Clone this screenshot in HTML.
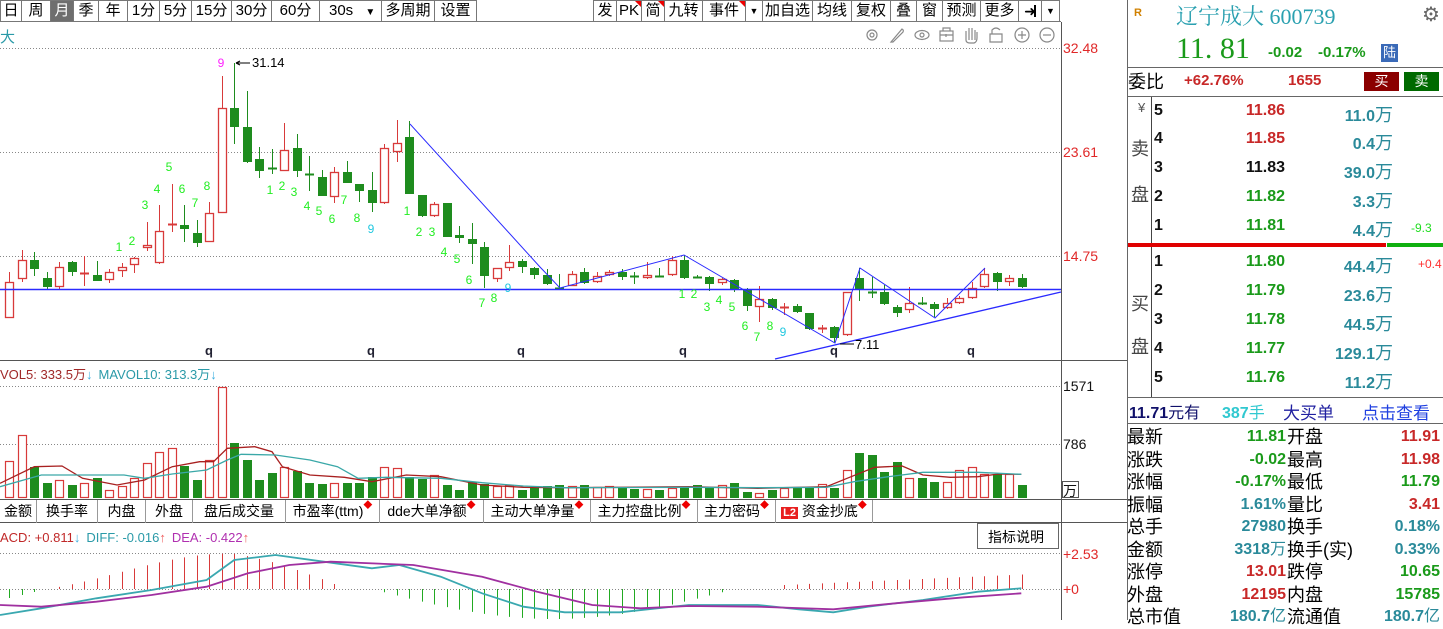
<!DOCTYPE html>
<html><head><meta charset="utf-8">
<style>
*{margin:0;padding:0;box-sizing:border-box}
body{width:1443px;height:620px;overflow:hidden;background:#fff;font-family:"Liberation Sans","Noto Sans CJK SC",sans-serif;position:relative}
.tb{position:absolute;top:0;height:22px;border:1px solid #777;border-left:none;font-size:15px;line-height:20px;text-align:center;color:#000;background:#fff}
.tb.sel{background:#6e6e6e;color:#fff}
.tri{position:absolute;top:0;right:0;width:0;height:0;border-top:6px solid #e00;border-left:6px solid transparent}
.abs{position:absolute;white-space:nowrap}
.rp{position:absolute;left:1127px;top:0;width:316px;height:620px;border-left:1px solid #666}
.hl{position:absolute;height:1px;background:#666}
.b{font-weight:bold}
.tab{position:absolute;top:500px;height:23px;border-right:1px solid #999;font-size:14px;line-height:23px;text-align:center}
.dot{color:#e00;font-size:9px;vertical-align:top;line-height:10px}
</style></head><body>

<div class="abs" style="left:0;top:21px;width:1061px;height:1px;background:#777"></div>
<div class="tb" style="left:0;width:22px;border-left:1px solid #777">日</div>
<div class="tb" style="left:22px;width:29px">周</div>
<div class="tb sel" style="left:51px;width:23px">月</div>
<div class="tb" style="left:74px;width:25px">季</div>
<div class="tb" style="left:99px;width:29px">年</div>
<div class="tb" style="left:128px;width:32px">1分</div>
<div class="tb" style="left:160px;width:32px">5分</div>
<div class="tb" style="left:192px;width:40px">15分</div>
<div class="tb" style="left:232px;width:40px">30分</div>
<div class="tb" style="left:272px;width:48px">60分</div>
<div class="tb" style="left:320px;width:62px;text-align:left;padding-left:9px">30s <span style="font-size:10px;padding-left:8px">▼</span></div>
<div class="tb" style="left:382px;width:53px">多周期</div>
<div class="tb" style="left:435px;width:42px">设置</div>

<div class="tb" style="left:593px;width:24px;border-left:1px solid #777">发</div>
<div class="tb" style="left:617px;width:25px">PK<span class="tri"></span></div>
<div class="tb" style="left:642px;width:23px">简<span class="tri"></span></div>
<div class="tb" style="left:665px;width:38px">九转</div>
<div class="tb" style="left:703px;width:43px">事件<span class="tri"></span></div>
<div class="tb" style="left:746px;width:17px;font-size:9px">▼</div>
<div class="tb" style="left:763px;width:50px">加自选</div>
<div class="tb" style="left:813px;width:39px">均线</div>
<div class="tb" style="left:852px;width:39px">复权</div>
<div class="tb" style="left:891px;width:26px">叠</div>
<div class="tb" style="left:917px;width:26px">窗</div>
<div class="tb" style="left:943px;width:38px">预测</div>
<div class="tb" style="left:981px;width:38px">更多</div>
<div class="tb" style="left:1019px;width:23px;font-size:14px">➜<span style="position:absolute;left:15px;top:4px;width:2px;height:12px;background:#000"></span></div>
<div class="tb" style="left:1042px;width:18px;font-size:9px">▼</div>

<div class="abs" style="left:0;top:26px;font-size:15px;color:#2a9aa8">大</div>

<svg id="ch" class="abs" style="left:0;top:0" width="1127" height="620" xmlns="http://www.w3.org/2000/svg" font-family="Liberation Sans, Noto Sans CJK SC, sans-serif">
<g stroke="#888" stroke-dasharray="1,2" stroke-width="1">
<line x1="0" y1="48.5" x2="1060" y2="48.5"/>
<line x1="0" y1="152.5" x2="1060" y2="152.5"/>
<line x1="0" y1="256.5" x2="1060" y2="256.5"/>
<line x1="0" y1="386.5" x2="1060" y2="386.5"/>
<line x1="0" y1="444.5" x2="1060" y2="444.5"/>
<line x1="0" y1="589.5" x2="1060" y2="589.5"/>
<line x1="0" y1="553.5" x2="1060" y2="553.5"/>
</g>
<g stroke="#555" stroke-width="1">
<line x1="1061.5" y1="22" x2="1061.5" y2="620"/>
<line x1="0" y1="360.5" x2="1127" y2="360.5"/>
<line x1="0" y1="499.5" x2="1127" y2="499.5"/>
<line x1="0" y1="522.5" x2="1127" y2="522.5"/>
</g>
<g fill="none" stroke="#888" stroke-width="1.2">
<circle cx="872" cy="35" r="5"/><circle cx="872" cy="35" r="2"/>
<path d="M891 42 L902 29 Q904 30 903 32 L893 42 Z"/>
<ellipse cx="922" cy="35" rx="7" ry="4.5"/><circle cx="922" cy="35" r="2"/>
<rect x="940" y="31" width="13" height="10"/><path d="M943 31 V28 H950 V31 M940 35 H953 M946 34 V37"/>
<path d="M966 40 V31 M969 40 V28 M972 40 V28 M975 40 V30 M966 40 Q966 43 970 43 H974 Q977 42 977 38 V32"/>
<path d="M990 42 V34 H1002 V42 Z M992 34 V30 Q996 26 1000 30"/>
<circle cx="1022" cy="35" r="7"/><path d="M1018 35 H1026 M1022 31 V39"/>
<circle cx="1047" cy="35" r="7"/><path d="M1043 35 H1051"/>
</g>
<g id="cand"></g>
<g stroke="#2a2aff" fill="none" stroke-width="1">
<line x1="0" y1="289.5" x2="1061" y2="289.5" stroke-width="1.6"/>
<polyline points="410,124 540,267 560,288 684,255 835,343 860,268 935,318 985,268"/>
<line x1="775" y1="359" x2="1061" y2="292" stroke-width="1.4"/>
</g>
<g font-size="12" fill="#22ee22" text-anchor="middle">
<text x="119" y="251">1</text><text x="132" y="245">2</text><text x="145" y="209">3</text><text x="157" y="193">4</text><text x="169" y="171">5</text><text x="182" y="193">6</text><text x="195" y="207">7</text><text x="207" y="190">8</text>
<text x="270" y="194">1</text><text x="282" y="190">2</text><text x="294" y="196">3</text><text x="307" y="210">4</text><text x="319" y="215">5</text><text x="332" y="223">6</text><text x="344" y="204">7</text><text x="357" y="222">8</text>
<text x="407" y="215">1</text><text x="419" y="236">2</text><text x="432" y="236">3</text><text x="444" y="256">4</text><text x="457" y="263">5</text><text x="469" y="284">6</text><text x="482" y="307">7</text><text x="494" y="302">8</text>
<text x="682" y="298">1</text><text x="694" y="298">2</text><text x="707" y="311">3</text><text x="719" y="304">4</text><text x="732" y="311">5</text><text x="745" y="330">6</text><text x="757" y="341">7</text><text x="770" y="330">8</text>
<text x="371" y="233" fill="#22c8e0">9</text><text x="508" y="292" fill="#22c8e0">9</text><text x="783" y="336" fill="#22c8e0">9</text>
<text x="221" y="67" fill="#ff22ff">9</text>
</g>
<path d="M236 63 H250 M236 63 L240 61 M236 63 L240 65" stroke="#000"/>
<text x="252" y="67" font-size="13" fill="#000">31.14</text>
<path d="M840 344 H854" stroke="#000"/>
<text x="855" y="349" font-size="13" fill="#000">7.11</text>
<g font-size="13" font-weight="bold" fill="#223" text-anchor="middle">
<text x="209" y="355">q</text><text x="371" y="355">q</text><text x="521" y="355">q</text><text x="683" y="355">q</text><text x="834" y="355">q</text><text x="971" y="355">q</text>
</g>
<g font-size="14" fill="#e02828">
<text x="1063" y="53">32.48</text><text x="1063" y="157">23.61</text><text x="1063" y="261">14.75</text>
<text x="1063" y="559">+2.53</text><text x="1063" y="594">+0</text>
</g>
<g font-size="14" fill="#111">
<text x="1063" y="391">1571</text><text x="1063" y="449">786</text>
</g>
<rect x="1062.5" y="481.5" width="16" height="16" fill="#fff" stroke="#555"/>
<text x="1063" y="496" font-size="14" fill="#111">万</text>
<g id="vol"></g>
<g id="macd"></g>
<text x="0" y="379" font-size="13" fill="#a02828">VOL5: 333.5万<tspan fill="#40b0e0">↓</tspan><tspan fill="#2a9aa8" dx="6">MAVOL10: 313.3万</tspan><tspan fill="#40b0e0">↓</tspan></text>
<text x="0" y="542" font-size="13" fill="#c02828">ACD: +0.811<tspan fill="#40b0e0">↓</tspan><tspan fill="#2a9aa8" dx="6">DIFF: -0.016</tspan><tspan fill="#f06060">↑</tspan><tspan fill="#b030b0" dx="6">DEA: -0.422</tspan><tspan fill="#f06060">↑</tspan></text>
<rect x="977.5" y="523.5" width="81" height="25" fill="#fff" stroke="#666"/>
<text x="988" y="542" font-size="14" fill="#000">指标说明</text>
</svg>

<div class="tab" style="left:0;width:37px">金额</div>
<div class="tab" style="left:37px;width:61px">换手率</div>
<div class="tab" style="left:98px;width:48px">内盘</div>
<div class="tab" style="left:146px;width:47px">外盘</div>
<div class="tab" style="left:193px;width:93px">盘后成交量</div>
<div class="tab" style="left:286px;width:94px">市盈率(ttm)<span class="dot">◆</span></div>
<div class="tab" style="left:380px;width:104px">dde大单净额<span class="dot">◆</span></div>
<div class="tab" style="left:484px;width:107px">主动大单净量<span class="dot">◆</span></div>
<div class="tab" style="left:591px;width:107px">主力控盘比例<span class="dot">◆</span></div>
<div class="tab" style="left:698px;width:78px">主力密码<span class="dot">◆</span></div>
<div class="tab" style="left:776px;width:97px"><span style="background:#e82020;color:#fff;font-size:11px;padding:0 2px;font-weight:bold">L2</span> 资金抄底<span class="dot">◆</span></div>

<div class="rp">
<div class="abs b" style="left:6px;top:7px;font-size:11px;color:#d08000">R</div>
<div class="abs" style="left:48px;top:0px;font-size:22px;color:#2aa0b0;font-family:'Liberation Serif','Noto Serif CJK SC',serif">辽宁成大 600739</div>
<div class="abs" style="left:294px;top:2px;font-size:20px;color:#666">⚙</div>
<div class="abs" style="left:48px;top:32px;font-size:30px;color:#1a9a1a;font-family:'Liberation Serif',serif">11. 81</div>
<div class="abs b" style="left:140px;top:44px;font-size:15px;color:#1a9a1a">-0.02</div>
<div class="abs b" style="left:190px;top:44px;font-size:15px;color:#1a9a1a">-0.17%</div>
<div class="abs" style="left:253px;top:44px;width:17px;height:18px;background:#3a6ab8;color:#fff;font-size:13px;line-height:18px;text-align:center">陆</div>
<div class="hl" style="left:0;top:67px;width:316px"></div>
<div class="abs" style="left:0;top:68px;font-size:18px;color:#000">委比</div>
<div class="abs b" style="left:56px;top:72px;font-size:15px;color:#c82828">+62.76%</div>
<div class="abs b" style="left:160px;top:72px;font-size:15px;color:#c82828">1655</div>
<div class="abs" style="left:236px;top:72px;width:35px;height:19px;background:#8b0000;color:#fff;font-size:14px;line-height:19px;text-align:center">买</div>
<div class="abs" style="left:276px;top:72px;width:35px;height:19px;background:#006a00;color:#fff;font-size:14px;line-height:19px;text-align:center">卖</div>
<div class="hl" style="left:0;top:96px;width:316px"></div>
<div class="abs" style="left:23px;top:97px;width:1px;height:300px;background:#444"></div>
<div class="abs" style="left:10px;top:100px;font-size:13px;color:#555">¥</div>
<div class="abs" style="left:3px;top:135px;font-size:18px;color:#444">卖</div>
<div class="abs" style="left:3px;top:181px;font-size:18px;color:#444">盘</div>
<div class="abs" style="left:3px;top:290px;font-size:18px;color:#444">买</div>
<div class="abs" style="left:3px;top:333px;font-size:18px;color:#444">盘</div>
<div id="ob"></div>
<div class="abs" style="left:0;top:243px;width:258px;height:4px;background:#e00000"></div>
<div class="abs" style="left:259px;top:243px;width:57px;height:4px;background:#10b010"></div>
<div class="abs" style="left:283px;top:221px;font-size:12px;color:#22dd22">-9.3</div>
<div class="abs" style="left:290px;top:257px;font-size:12px;color:#ff3030">+0.4</div>
<div class="hl" style="left:0;top:397px;width:316px"></div>
<div class="abs" style="left:1px;top:399px;font-size:16px;color:#10106a"><b>11.71</b>元有</div>
<div class="abs" style="left:94px;top:399px;font-size:16px;color:#30c8d0"><b>387</b>手</div>
<div class="abs" style="left:155px;top:399px;font-size:17px;color:#2020a0">大买单</div>
<div class="abs" style="left:234px;top:399px;font-size:17px;color:#2040e0">点击查看</div>
<div class="hl" style="left:0;top:423px;width:316px"></div>
</div>

<script>
var NS="http://www.w3.org/2000/svg";
function el(p,t,a){var e=document.createElementNS(NS,t);for(var k in a)e.setAttribute(k,a[k]);p.appendChild(e);return e;}
var D=[
"r 282 318 272 318","r 260 279 250 282","g 260 269 252 276","g 278 287 272 290","r 267 287 262 290","g 262 272 261 276","r 273 273 256 286","g 275 281 261 281","r 272 280 269 283","r 267 271 263 277",
"r 258 265 257 273","r 245 248 222 251","r 231 263 205 264","r 224 224 184 232","g 225 229 205 242","g 233 243 220 247","r 213 242 202 242","r 108 213 76 213","g 108 127 63 144","g 127 162 91 163",
"g 159 171 147 178","g 168 168 149 174","r 150 171 123 171","g 148 171 134 177","g 174 174 156 191","g 177 196 170 196","r 172 197 167 203","g 172 183 161 183","g 184 191 184 202","g 190 203 172 212",
"r 148 203 144 204","r 143 152 120 162","g 137 194 121 194","g 195 216 195 217","r 204 216 202 217","g 203 237 203 237","g 235 238 226 243","g 239 244 223 264","g 247 276 242 288","r 268 279 268 282",
"r 262 268 245 271","g 261 267 259 273","g 268 275 267 279","g 275 284 269 285","g 288 288 274 290","r 274 286 271 286","g 272 283 268 284","r 276 282 272 283","r 272 275 270 276","g 272 277 269 280",
"g 276 276 272 284","r 275 278 262 279","g 276 276 268 277","r 260 275 256 276","g 260 278 255 279","g 277 277 275 278","g 277 284 276 291","r 279 283 278 285","g 280 289 279 292","g 289 306 288 311",
"r 299 307 286 322","g 299 308 298 310","r 307 307 303 315","g 306 312 304 313","g 313 329 313 330","r 328 328 325 333","g 327 338 326 343","r 292 335 292 336","g 278 290 268 301","g 292 292 277 298",
"g 292 304 285 305","g 307 313 305 317","r 303 310 287 313","g 303 303 297 305","g 304 309 302 317","r 303 308 298 309","r 298 303 296 304","r 288 298 282 299","r 274 287 268 288","g 273 282 272 291",
"r 278 282 275 286","g 278 287 274 288"];
var V=[461,435,467,483,480,485,483,478,490,486,478,463,452,448,466,480,460,387,443,460,480,473,467,471,483,484,483,483,483,477,467,468,477,479,475,485,490,482,484,486,485,490,487,486,485,486,485,487,486,488,489,489,490,488,488,485,487,485,483,492,493,490,488,487,488,484,488,470,453,455,472,462,478,478,482,482,470,467,474,474,474,485];
var RED="#d83a3a",GRN="#1e8c1e";
var cg=document.getElementById("cand"),vg=document.getElementById("vol"),mg=document.getElementById("macd");
var step=(1022-9)/81;
D.forEach(function(s,i){var a=s.split(" "),up=a[0]=="r",t=+a[1],b=+a[2],h=+a[3],l=+a[4];var x=Math.round(9+step*i);
 var c=up?RED:GRN;
 el(cg,"line",{x1:x+.5,y1:h,x2:x+.5,y2:t,stroke:c});
 el(cg,"line",{x1:x+.5,y1:b,x2:x+.5,y2:l,stroke:c});
 if(b-t<1.5){el(cg,"line",{x1:x-4,y1:t+.5,x2:x+5,y2:t+.5,stroke:c,"stroke-width":2});}
 else if(up)el(cg,"rect",{x:x-3.5,y:t+.5,width:8,height:b-t-1,fill:"#fff",stroke:c,"stroke-width":1.3});
 else el(cg,"rect",{x:x-4,y:t,width:9,height:b-t,fill:c});
 var vt=V[i];
 if(up)el(vg,"rect",{x:x-3.5,y:vt+.5,width:8,height:497-vt,fill:"#fff",stroke:c,"stroke-width":1.2});
 else el(vg,"rect",{x:x-4,y:vt,width:9,height:498-vt,fill:c});
 var hv;
 if(i<3)hv=-(3-i)*3; else if(i<27)hv=Math.sin((i-3)/24*Math.PI)*38*(i<18?(0.4+0.6*(i-3)/15):1); else if(i<29)hv=0;
 else if(i<58)hv=-Math.sin((i-29)/29*Math.PI)*30; else if(i<62)hv=0; else hv=4+(i-62)*0.55;
 if(Math.abs(hv)>0.5)el(mg,"line",{x1:x+.5,y1:589,x2:x+.5,y2:589-hv,stroke:hv>0?RED:"#22aa22"});
});
function pl(pts,sx,c,w,g){var p=[];for(var i=0;i<pts.length;i+=2)p.push((pts[i]/sx).toFixed(1)+","+(360+pts[i+1]/3).toFixed(1));el(g,"polyline",{points:p.join(" "),fill:"none",stroke:c,"stroke-width":w});}
var s=1.452;
pl([0,370,50,320,90,318,120,355,170,375,210,360,250,320,290,305,310,305,330,265,370,260,395,275,410,320,450,345,500,352,540,365,590,345,640,350,700,375,760,382,820,383,900,382,1000,380,1100,385,1200,380,1230,355,1270,322,1310,318,1340,345,1380,352,1420,350,1450,342,1483,343],s,"#a82020",1.3,vg);
pl([0,380,60,345,120,345,180,345,210,355,250,342,300,330,330,300,350,283,400,285,450,300,490,320,520,355,560,352,640,355,700,368,760,378,820,383,1000,382,1100,383,1200,382,1240,365,1290,350,1340,337,1420,337,1483,343],s,"#3aa8a8",1.3,vg);
pl([0,765,60,745,140,715,220,690,300,660,340,600,400,585,470,605,540,625,580,615,640,650,700,700,760,740,820,757,900,757,1000,735,1100,735,1160,748,1210,757,1260,740,1340,720,1420,695,1483,685],s,"#3aa8b0",1.8,mg);
pl([0,735,60,740,140,725,220,705,300,680,360,640,420,615,480,605,600,615,700,650,780,695,860,735,930,745,1000,738,1100,740,1210,748,1300,730,1400,712,1483,700],s,"#a030a0",1.8,mg);
</script>
<script>
(function(){
var ob=document.getElementById("ob"),h="";
var rows=[["5","11.86","#c82828","11.0",113],["4","11.85","#c82828","0.4",141],["3","11.83","#111","39.0",170],["2","11.82","#1a9a1a","3.3",199],["1","11.81","#1a9a1a","4.4",228],
["1","11.80","#1a9a1a","44.4",264],["2","11.79","#1a9a1a","23.6",293],["3","11.78","#1a9a1a","44.5",322],["4","11.77","#1a9a1a","129.1",351],["5","11.76","#1a9a1a","11.2",380]];
rows.forEach(function(r){var t=r[4]-11;
h+='<div class="abs b" style="left:26px;top:'+t+'px;font-size:16px;color:#111">'+r[0]+'</div>';
h+='<div class="abs b" style="right:158px;top:'+t+'px;font-size:16px;color:'+r[2]+'">'+r[1]+'</div>';
h+='<div class="abs" style="right:50px;top:'+(t-1)+'px;font-size:16px;color:#2a8a9a"><b>'+r[3]+'</b><span style="font-size:18px">万</span></div>';});
ob.innerHTML=h;
})();
</script>
<div class="rp" style="pointer-events:none;border:none">
<div class="abs" style="left:0;top:426px;width:316px;font-size:18px;line-height:22.5px">
<div style="position:relative;height:22.5px"><span>最新</span><b class="abs" style="right:157px;font-size:16px;color:#1a9a1a">11.81</b><span class="abs" style="left:160px">开盘</span><b class="abs" style="right:3px;font-size:16px;color:#c82828">11.91</b></div>
<div style="position:relative;height:22.5px"><span>涨跌</span><b class="abs" style="right:157px;font-size:16px;color:#1a9a1a">-0.02</b><span class="abs" style="left:160px">最高</span><b class="abs" style="right:3px;font-size:16px;color:#c82828">11.98</b></div>
<div style="position:relative;height:22.5px"><span>涨幅</span><b class="abs" style="right:157px;font-size:16px;color:#1a9a1a">-0.17%</b><span class="abs" style="left:160px">最低</span><b class="abs" style="right:3px;font-size:16px;color:#1a9a1a">11.79</b></div>
<div style="position:relative;height:22.5px"><span>振幅</span><b class="abs" style="right:157px;font-size:16px;color:#2a8a9a">1.61%</b><span class="abs" style="left:160px">量比</span><b class="abs" style="right:3px;font-size:16px;color:#c82828">3.41</b></div>
<div style="position:relative;height:22.5px"><span>总手</span><b class="abs" style="right:157px;font-size:16px;color:#2a8a9a">27980</b><span class="abs" style="left:160px">换手</span><b class="abs" style="right:3px;font-size:16px;color:#2a8a9a">0.18%</b></div>
<div style="position:relative;height:22.5px"><span>金额</span><span class="abs" style="right:157px;font-size:16px;color:#2a8a9a"><b>3318</b>万</span><span class="abs" style="left:160px">换手(实)</span><b class="abs" style="right:3px;font-size:16px;color:#2a8a9a">0.33%</b></div>
<div style="position:relative;height:22.5px"><span>涨停</span><b class="abs" style="right:157px;font-size:16px;color:#c82828">13.01</b><span class="abs" style="left:160px">跌停</span><b class="abs" style="right:3px;font-size:16px;color:#1a9a1a">10.65</b></div>
<div style="position:relative;height:22.5px"><span>外盘</span><b class="abs" style="right:157px;font-size:16px;color:#c82828">12195</b><span class="abs" style="left:160px">内盘</span><b class="abs" style="right:3px;font-size:16px;color:#1a9a1a">15785</b></div>
<div style="position:relative;height:22.5px"><span>总市值</span><span class="abs" style="right:157px;font-size:16px;color:#2a8a9a"><b>180.7</b>亿</span><span class="abs" style="left:160px">流通值</span><span class="abs" style="right:3px;font-size:16px;color:#2a8a9a"><b>180.7</b>亿</span></div>
</div>
</div>
</body></html>
